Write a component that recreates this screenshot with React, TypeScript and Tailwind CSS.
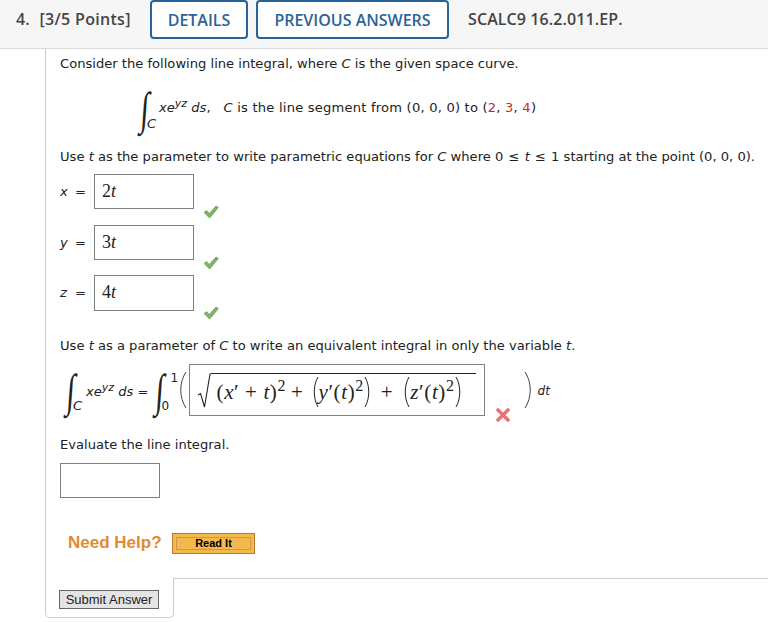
const body = "font-['DejaVu_Sans',sans-serif] text-[13.1px] leading-[16px] text-[#222]";
const math = "font-['Liberation_Serif',serif] text-[#222]";
const sup2 = "text-[16px] top-0 align-[8px] leading-[0]";
const supYz = "text-[11px] top-0 align-[5px] leading-[0]";

function Check() {
  return (
    <svg width="16" height="14" viewBox="0 0 16 14" className="block">
      <path d="M1 7.5 L3.6 5.6 L6.3 8.4 L13 1 L15.4 2.6 L6.6 13 Z" fill="#7db36b" stroke="#5f9a52" strokeWidth="0.7" />
    </svg>
  );
}

function Cross() {
  return (
    <svg width="14" height="14" viewBox="0 0 14 14" className="block">
      <path d="M2 2 L12 12 M12 2 L2 12" stroke="#e8737a" strokeWidth="3.6" strokeLinecap="round" />
    </svg>
  );
}

function Paren({ flip = false, h = 38, w = 10, color = "#444" }: { flip?: boolean; h?: number; w?: number; color?: string }) {
  return (
    <svg width={w} height={h} viewBox={`0 0 ${w} ${h}`} className={flip ? "block shrink-0 -scale-x-100" : "block shrink-0"}>
      <path d={`M${w - 1} 1 C2 ${h * 0.3} 2 ${h * 0.7} ${w - 1} ${h - 1}`} fill="none" stroke={color} strokeWidth="1" />
    </svg>
  );
}

function Integral() {
  return <span className="block w-[22px] text-center font-['Liberation_Serif',serif] text-[46px] leading-[38px] -skew-x-6 scale-x-[.65]">∫</span>;
}

function AnswerRow({ name, value, className }: { name: string; value: string; className: string }) {
  return (
    <div className={`flex items-start ${className}`}>
      <div className={`${body} w-[34px] h-[35px] flex items-center`}>
        <i className="w-[15px]">{name}</i>
        <span>=</span>
      </div>
      <div className={`${math} w-[100px] h-full border border-[#808080] pl-[7px] text-[18px] leading-[32px]`}>
        {value[0]}<i>{value[1]}</i>
      </div>
      <div className="ml-[9px] mt-[31px]">
        <Check />
      </div>
    </div>
  );
}

function Radicand() {
  return (
    <div className={`${math} text-[21px] leading-[38px] whitespace-nowrap flex items-center h-[38px] tracking-[0.6px]`}>
      <span>(<i>x</i>′ + <i>t</i>)<sup className={sup2}>2</sup></span>
      <span className="ml-[5px]">+</span>
      <span className="ml-[7px]"><Paren w={8} h={32} color="#222" /></span>
      <span><i>y</i>′(<i>t</i>)<sup className={sup2}>2</sup></span>
      <Paren flip w={8} h={32} color="#222" />
      <span className="mx-[9px]">+</span>
      <Paren w={8} h={32} color="#222" />
      <span><i>z</i>′(<i>t</i>)<sup className={sup2}>2</sup></span>
      <Paren flip w={8} h={32} color="#222" />
    </div>
  );
}

export default function App() {
  return (
    <div className="w-[768px] h-[622px] bg-white overflow-hidden">
      {/* Header */}
      <div className="h-[49px] bg-[#f6f6f6] border-b border-[#dcdcdc] flex items-start pl-[16px] font-['Open_Sans',sans-serif] font-semibold text-[#444] text-[16px]">
        <span className="mt-[9px] leading-[20px] w-[134px] whitespace-nowrap">
          4.<span className="ml-[10px] tracking-[0.3px]">[3/5 Points]</span>
        </span>
        <div className="w-[98px] h-[39px] border-2 border-[#2a6496] rounded-[4px] bg-white text-[#2a6496] flex items-center justify-center">DETAILS</div>
        <div className="ml-[8px] w-[193px] h-[39px] border-2 border-[#2a6496] rounded-[4px] bg-white text-[#2a6496] flex items-center justify-center">PREVIOUS ANSWERS</div>
        <span className="ml-[19px] mt-[9px] leading-[20px] tracking-[0.1px]">SCALC9 16.2.011.EP.</span>
      </div>

      {/* Question panel */}
      <div className="ml-[45px] h-[529px] border-l border-[#cccccc] pl-[14px] pt-[7px]">
        <p className={body}>
          Consider the following line integral, where <i>C</i> is the given space curve.
        </p>

        <div className={`${body} mt-[18px] ml-[74px] h-[42px] flex items-start whitespace-nowrap`}>
          <div className="w-[25px] h-[42px] relative">
            <Integral />
            <i className="absolute left-[13px] bottom-[0px]">C</i>
          </div>
          <span className="mt-[10px]">
            <i>xe<sup className={supYz}>yz</sup> ds</i>,<span className="ml-[13px] tracking-[0.2px]"><i>C</i> is the line segment from (0, 0, 0) to (<span className="text-[#d0281e]">2</span>, <span className="text-[#d0281e]">3</span>, <span className="text-[#d0281e]">4</span>)</span>
          </span>
        </div>

        <p className={`${body} mt-[17px] whitespace-nowrap`}>
          Use <i>t</i> as the parameter to write parametric equations for <i>C</i> where 0 <span className="mx-[1px]">≤</span> <i>t</i> <span className="mx-[1px]">≤</span> 1 starting at the point (0, 0, 0).
        </p>

        <div className="mt-[9px]">
          <AnswerRow name="x" value="2t" className="h-[35px] mb-[16px]" />
          <AnswerRow name="y" value="3t" className="h-[35px] mb-[15px]" />
          <AnswerRow name="z" value="4t" className="h-[36px]" />
        </div>

        <p className={`${body} mt-[27px]`}>
          Use <i>t</i> as a parameter of <i>C</i> to write an equivalent integral in only the variable <i>t</i>.
        </p>

        <div className={`${body} mt-[10px] h-[52px] flex items-center whitespace-nowrap`}>
          <div className="w-[26px] h-[42px] relative mt-[6px]">
            <Integral />
            <i className="absolute left-[13px] bottom-[0px]">C</i>
          </div>
          <span className="mt-[4px]">
            <i>xe<sup className={supYz}>yz</sup> ds</i> =
          </span>
          <div className="w-[28px] h-[42px] relative mt-[6px]">
            <Integral />
            <span className="absolute left-[22px] top-[-2px] text-[12px]">1</span>
            <span className="absolute left-[13px] bottom-[0px] text-[12px]">0</span>
          </div>
          <Paren />
          <div className="ml-[2px] w-[296px] h-[52px] border border-[#808080] flex items-end pl-[7px] pb-[6px]">
            <svg width="14" height="36" viewBox="0 0 14 36" className="block shrink-0">
              <path d="M1 22 L3.5 20.5 L7.5 34 L13 1 L14 1" fill="none" stroke="#222" strokeWidth="1.1" />
            </svg>
            <div className="border-t border-[#222] w-[265px] pl-[6px] h-[36px] flex items-center">
              <Radicand />
            </div>
          </div>
          <div className="ml-[11px] mt-[50px]">
            <Cross />
          </div>
          <div className="ml-[14px]">
            <Paren flip />
          </div>
          <i className="ml-[4px] mt-[2px] text-[12px]">dt</i>
        </div>

        <p className={`${body} mt-[21px]`}>Evaluate the line integral.</p>

        <div className="mt-[10px] w-[100px] h-[35px] border border-[#808080]" />

        <div className="mt-[34px] ml-[8px] flex items-center h-[22px] font-['Liberation_Sans',sans-serif]">
          <span className="text-[17px] font-bold text-[#e28a33] w-[104px] whitespace-nowrap">Need Help?</span>
          <div className="w-[83px] h-[21px] bg-[#f4b84d] border border-[#b87a35] p-[3px] flex">
            <div className="flex-1 border border-[#c99a4e] flex items-center justify-center text-[11px] font-bold text-black">Read It</div>
          </div>
        </div>
      </div>

      {/* Submit tab */}
      <div className="flex items-start ml-[45px]">
        <div className="w-[129px] h-[40px] border-l border-r border-b border-[#cccccc] rounded-b-[5px] pl-[13px] pt-[12px]">
          <div className="w-[100px] h-[19px] border border-[#666] bg-[#e4e4e4] flex items-center justify-center font-['Liberation_Sans',sans-serif] text-[13px] text-[#222] whitespace-nowrap">
            Submit Answer
          </div>
        </div>
        <div className="flex-1 border-t border-[#cccccc]" />
      </div>
    </div>
  );
}
